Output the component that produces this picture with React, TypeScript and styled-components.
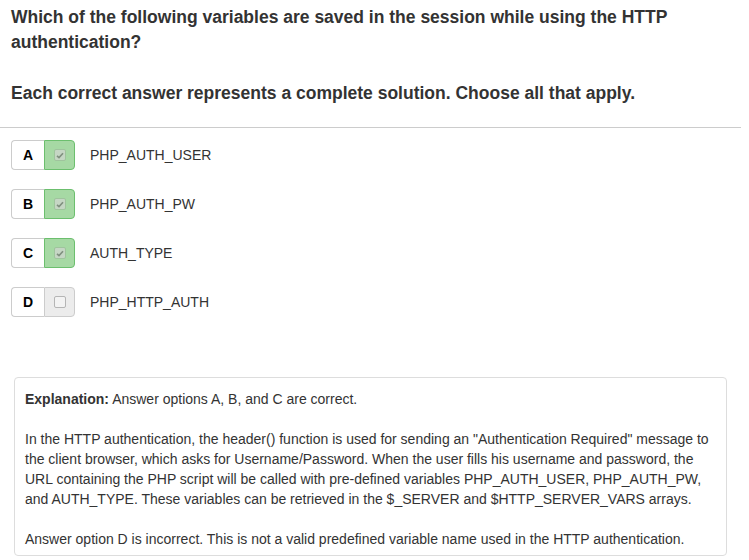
import React, { ReactElement } from "react";
import styled, { createGlobalStyle } from "styled-components";

const GlobalStyle = createGlobalStyle`
  body {
    margin: 0;
    background: #fff;
    font-family: "Liberation Sans", Arial, sans-serif;
    color: #333;
  }
`;

const Page = styled.div`
  width: 741px;
`;

const Question = styled.div`
  padding: 5px 11px 21px;
  border-bottom: 1px solid #ccc;
`;

const Heading = styled.p`
  margin: 0;
  font-size: 17.5px;
  font-weight: bold;
  line-height: 25px;
  & + & {
    margin-top: 26px;
  }
`;

const Options = styled.ul`
  list-style: none;
  margin: 0;
  padding: 12px 0 0 11px;
  display: flex;
  flex-direction: column;
  gap: 19px;
`;

const OptionRow = styled.li`
  display: flex;
  align-items: center;
  height: 30px;
`;

const Toggle = styled.div`
  display: flex;
  height: 30px;
  width: 64px;
`;

const Letter = styled.span`
  width: 33px;
  box-sizing: border-box;
  display: flex;
  align-items: center;
  justify-content: center;
  border: 1px solid #ccc;
  border-right: none;
  border-radius: 4px 0 0 4px;
  font-size: 14px;
  font-weight: bold;
  color: #000;
  background: #fff;
`;

const CheckCell = styled.span<{ checked: boolean }>`
  width: 31px;
  box-sizing: border-box;
  display: flex;
  align-items: center;
  justify-content: center;
  border: 1px solid ${(p) => (p.checked ? "#6cbf6e" : "#ccc")};
  border-radius: 0 4px 4px 0;
  background: ${(p) => (p.checked ? "#a6d9a4" : "#ececec")};
`;

const Tick = styled.span<{ checked: boolean }>`
  width: 12px;
  height: 12px;
  box-sizing: border-box;
  border: 1px solid ${(p) => (p.checked ? "#9fc49d" : "#b5b5b5")};
  border-radius: 2px;
  background: ${(p) => (p.checked ? "#c5d6c4" : "#f3f3f3")};
  display: flex;
  align-items: center;
  justify-content: center;
`;

const Label = styled.span`
  margin-left: 15px;
  font-size: 14px;
  color: #333;
`;

const Explanation = styled.div`
  margin: 60px 14px 0 14px;
  width: 713px;
  box-sizing: border-box;
  border: 1px solid #ddd;
  border-radius: 4px;
  padding: 11px 10px 6px;
  font-size: 14px;
  line-height: 20px;
  color: #333;
`;

const Para = styled.p`
  margin: 0;
  & + & {
    margin-top: 20px;
  }
`;

interface Option {
  letter: string;
  text: string;
  checked: boolean;
}

const options: Option[] = [
  { letter: "A", text: "PHP_AUTH_USER", checked: true },
  { letter: "B", text: "PHP_AUTH_PW", checked: true },
  { letter: "C", text: "AUTH_TYPE", checked: true },
  { letter: "D", text: "PHP_HTTP_AUTH", checked: false },
];

const App = (): ReactElement => (
  <Page>
    <GlobalStyle />
    <Question>
      <Heading>
        Which of the following variables are saved in the session while using
        the HTTP authentication?
      </Heading>
      <Heading>
        Each correct answer represents a complete solution. Choose all that
        apply.
      </Heading>
    </Question>
    <Options>
      {options.map((o) => (
        <OptionRow key={o.letter}>
          <Toggle>
            <Letter>{o.letter}</Letter>
            <CheckCell checked={o.checked}>
              <Tick checked={o.checked}>
                {o.checked && (
                  <svg width="8" height="7" viewBox="0 0 8 7">
                    <path
                      d="M1 3.8 L3 5.6 L7 1.2"
                      fill="none"
                      stroke="#7f8f7e"
                      strokeWidth="1.6"
                    />
                  </svg>
                )}
              </Tick>
            </CheckCell>
          </Toggle>
          <Label>{o.text}</Label>
        </OptionRow>
      ))}
    </Options>
    <Explanation>
      <Para>
        <b>Explanation:</b> Answer options A, B, and C are correct.
      </Para>
      <Para>
        In the HTTP authentication, the header() function is used for sending
        an "Authentication Required" message to the client browser, which asks
        for Username/Password. When the user fills his username and password,
        the URL containing the PHP script will be called with pre-defined
        variables PHP_AUTH_USER, PHP_AUTH_PW, and AUTH_TYPE. These variables can
        be retrieved in the $_SERVER and $HTTP_SERVER_VARS arrays.
      </Para>
      <Para>
        Answer option D is incorrect. This is not a valid predefined variable
        name used in the HTTP authentication.
      </Para>
    </Explanation>
  </Page>
);

export default App;
